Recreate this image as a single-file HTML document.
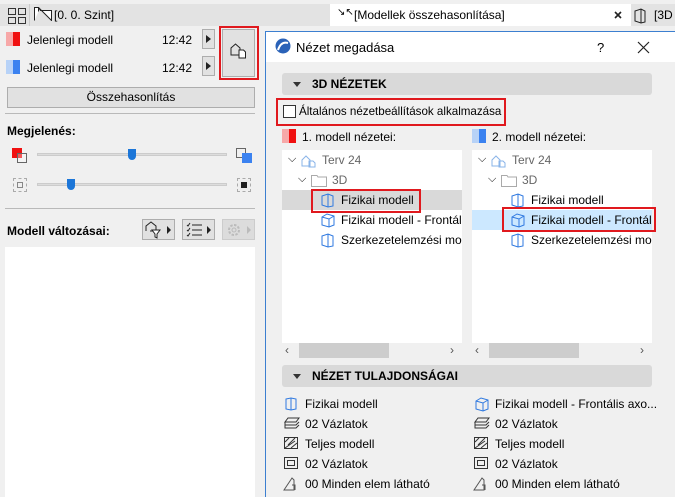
<!DOCTYPE html>
<html><head><meta charset="utf-8"><style>
*{box-sizing:border-box;margin:0;padding:0}
body{width:675px;height:497px;overflow:hidden;background:#f0f0f0;font-family:"Liberation Sans",sans-serif;font-size:12px;color:#000;position:relative}
.a{position:absolute}
.t{position:absolute;white-space:nowrap;line-height:14px}
.b{font-weight:bold}
.btn{position:absolute;background:#e1e1e1;border:1px solid #adadad}
.hdr{position:absolute;background:#d9d9d9;border-radius:3px;font-weight:bold;font-size:12px;line-height:22px;padding-left:30px}
.hdr:before{content:"";position:absolute;left:11px;top:9px;border-left:4px solid transparent;border-right:4px solid transparent;border-top:5px solid #333}
.red{position:absolute;border:2px solid #e0191e}
.tree{position:absolute;background:#fff;overflow:hidden}
.sb{position:absolute;background:#f0f0f0;height:15px}
.sb .th{position:absolute;top:0;height:15px;background:#cdcdcd}
</style></head><body>
<div class="a" style="left:0;top:0;width:675px;height:4px;background:#f0f0f0"></div>
<div class="a" style="left:0;top:4px;width:675px;height:22px;background:#e3e3e3"></div>
<svg class="a" style="left:8px;top:8px" width="18" height="16"><g fill="none" stroke="#333"><rect x="0.5" y="0.5" width="7" height="6"/><rect x="10.5" y="0.5" width="7" height="6"/><rect x="0.5" y="9.5" width="7" height="6"/><rect x="10.5" y="9.5" width="7" height="6"/></g></svg>
<div class="a" style="left:29px;top:4px;width:1px;height:22px;background:#ccc"></div>
<svg class="a" style="left:34px;top:7px" width="18" height="14"><path d="M0.5 13.5V0.5H4.5V4.5M4.5 0.5L6.5 3.5H17.5V13.5Z" fill="#fff" stroke="#222"/></svg>
<div class="t" style="left:54px;top:8px">[0. 0. Szint]</div>
<div class="a" style="left:330px;top:4px;width:301px;height:22px;background:#fff"></div>
<div class="t" style="left:337px;top:6px;font-size:10px">↘↖</div>
<div class="t" style="left:354px;top:8px">[Modellek összehasonlítása]</div>
<svg class="a" style="left:614px;top:11px" width="8" height="8"><path d="M1 1L7 7M7 1L1 7" stroke="#222" stroke-width="1.6"/></svg>
<svg class="a" style="left:634px;top:8px" width="14" height="16"><path d="M1 3L7 1L11 3V14L7 15L1 13Z M7 1V15" fill="none" stroke="#222"/></svg>
<div class="t" style="left:654px;top:8px">[3D</div>

<div class="a" style="left:6px;top:32px;width:7px;height:14px;background:#f7a8a8"></div>
<div class="a" style="left:13px;top:32px;width:7px;height:14px;background:#f01010"></div>
<div class="t" style="left:27px;top:33px">Jelenlegi modell</div>
<div class="t" style="left:162px;top:33px">12:42</div>
<div class="btn" style="left:202px;top:29px;width:13px;height:20px"><div class="a" style="left:3px;top:5px;border-top:4px solid transparent;border-bottom:4px solid transparent;border-left:5px solid #222"></div></div>
<div class="a" style="left:6px;top:60px;width:7px;height:14px;background:#b7d2f7"></div>
<div class="a" style="left:13px;top:60px;width:7px;height:14px;background:#3b82f0"></div>
<div class="t" style="left:27px;top:61px">Jelenlegi modell</div>
<div class="t" style="left:162px;top:61px">12:42</div>
<div class="btn" style="left:202px;top:56px;width:13px;height:20px"><div class="a" style="left:3px;top:5px;border-top:4px solid transparent;border-bottom:4px solid transparent;border-left:5px solid #222"></div></div>
<div class="btn" style="left:222px;top:29px;width:33px;height:48px"></div>
<svg class="a" style="left:230px;top:43px" width="18" height="16"><path d="M1 12V5L5.5 1L10 5V12Z" fill="none" stroke="#222"/><path d="M9 7H13.5L15.5 9V15H9Z" fill="#fff" stroke="#222"/></svg>
<div class="red" style="left:219px;top:26px;width:40px;height:54px"></div>
<div class="btn" style="left:7px;top:87px;width:248px;height:21px;text-align:center;line-height:19px">Összehasonlítás</div>
<div class="a" style="left:5px;top:113px;width:250px;height:1px;background:#b9b9b9"></div>
<div class="t b" style="left:7px;top:124px">Megjelenés:</div>
<div class="a" style="left:12px;top:148px;width:10px;height:10px;background:#f01010"></div>
<div class="a" style="left:17px;top:153px;width:10px;height:10px;border:1px solid #666;background:rgba(255,255,255,.3)"></div>
<div class="a" style="left:37px;top:153px;width:190px;height:3px;background:#ddd;border:1px solid #ccc"></div>
<div class="a" style="left:128px;top:149px;width:8px;height:11px;background:#1c76d8;border-radius:0 0 4px 4px"></div>
<div class="a" style="left:236px;top:148px;width:10px;height:10px;border:1px solid #666"></div>
<div class="a" style="left:242px;top:153px;width:10px;height:10px;background:#3b82f0"></div>
<div class="a" style="left:13px;top:178px;width:14px;height:14px;border:1px dashed #aaa"></div>
<div class="a" style="left:17px;top:182px;width:6px;height:6px;border:1px solid #888"></div>
<div class="a" style="left:37px;top:183px;width:190px;height:3px;background:#ddd;border:1px solid #ccc"></div>
<div class="a" style="left:67px;top:179px;width:8px;height:11px;background:#1c76d8;border-radius:0 0 4px 4px"></div>
<div class="a" style="left:237px;top:178px;width:14px;height:14px;border:1px dashed #aaa"></div>
<div class="a" style="left:241px;top:182px;width:6px;height:6px;background:#222"></div>
<div class="a" style="left:5px;top:208px;width:250px;height:1px;background:#b9b9b9"></div>
<div class="t b" style="left:7px;top:224px">Modell változásai:</div>
<div class="btn" style="left:142px;top:219px;width:33px;height:21px"></div>
<svg class="a" style="left:145px;top:221px" width="20" height="18"><path d="M1 10V5L6 1L11 5V10H5" fill="none" stroke="#222"/><path d="M7 9H15L12 13V17L10 16V13Z" fill="#fff" stroke="#222"/></svg>
<div class="a" style="left:167px;top:226px;border-top:4px solid transparent;border-bottom:4px solid transparent;border-left:4px solid #222"></div>
<div class="btn" style="left:182px;top:219px;width:33px;height:21px"></div>
<svg class="a" style="left:186px;top:222px" width="18" height="16"><g stroke="#222" fill="none"><path d="M1 3L2 4L4 1M1 8L2 9L4 6M1 13L2 14L4 11"/><path d="M6 3H16M6 8H16M6 13H16"/></g></svg>
<div class="a" style="left:207px;top:226px;border-top:4px solid transparent;border-bottom:4px solid transparent;border-left:4px solid #222"></div>
<div class="a" style="left:222px;top:219px;width:33px;height:21px;background:#dcdcdc;border:1px solid #ccc"></div>
<svg class="a" style="left:226px;top:222px" width="16" height="16"><circle cx="8" cy="8" r="5" fill="none" stroke="#bbb" stroke-width="2" stroke-dasharray="2.5 1.4"/><circle cx="8" cy="8" r="2" fill="none" stroke="#bbb"/></svg>
<div class="a" style="left:247px;top:226px;border-top:4px solid transparent;border-bottom:4px solid transparent;border-left:4px solid #bbb"></div>
<div class="a" style="left:5px;top:247px;width:250px;height:250px;background:#fff"></div>

<div class="a" style="left:265px;top:31px;width:410px;height:466px;border:1px solid #3c7fd0;border-right:none;border-bottom:none;background:#f0f0f0"></div>
<div class="a" style="left:266px;top:32px;width:409px;height:30px;background:#fff"></div>
<svg class="a" style="left:275px;top:38px" width="16" height="16"><circle cx="8" cy="8" r="7.5" fill="#2a62b8"/><path d="M3 12Q6 3 13 5" stroke="#fff" stroke-width="2" fill="none"/></svg>
<div class="t" style="left:296px;top:41px;font-size:13px">Nézet megadása</div>
<div class="t" style="left:597px;top:41px;font-size:13px">?</div>
<svg class="a" style="left:637px;top:41px" width="13" height="13"><path d="M1 1L12 12M12 1L1 12" stroke="#222" stroke-width="1.2"/></svg>

<div class="hdr" style="left:282px;top:73px;width:370px;height:22px">3D NÉZETEK</div>
<div class="a" style="left:283px;top:105px;width:13px;height:13px;border:1px solid #333;background:#fff"></div>
<div class="t" style="left:299px;top:105px;font-size:11.6px">Általános nézetbeállítások alkalmazása</div>
<div class="red" style="left:276px;top:98px;width:230px;height:28px"></div>

<div class="a" style="left:282px;top:129px;width:7px;height:14px;background:#f7a8a8"></div>
<div class="a" style="left:289px;top:129px;width:7px;height:14px;background:#f01010"></div>
<div class="t" style="left:302px;top:130px">1. modell nézetei:</div>
<div class="a" style="left:472px;top:129px;width:7px;height:14px;background:#b7d2f7"></div>
<div class="a" style="left:479px;top:129px;width:7px;height:14px;background:#3b82f0"></div>
<div class="t" style="left:492px;top:130px">2. modell nézetei:</div>

<div class="tree" style="left:282px;top:150px;width:180px;height:193px">
 <div class="a" style="left:0;top:40px;width:180px;height:20px;background:#d9d9d9"></div>
 <div class="t" style="left:6px;top:2px;font-size:11px">⌵</div>
 <svg class="a" style="left:19px;top:4px" width="16" height="14"><path d="M1 12V6L5 2L9 6V12Z M8 7H12L14 9V13H8Z" fill="#fff" stroke="#8ab4e8"/></svg>
 <div class="t" style="left:40px;top:3px;color:#666">Terv 24</div>
 <div class="t" style="left:16px;top:22px;font-size:11px">⌵</div>
 <svg class="a" style="left:29px;top:24px" width="16" height="13"><path d="M0.5 1.5H6L7 3H15.5V12.5H0.5Z" fill="#fff" stroke="#aaa"/></svg>
 <div class="t" style="left:50px;top:23px;color:#666">3D</div>
 <svg class="a" style="left:39px;top:43px" width="14" height="15"><path d="M1 3L7 1L12 3V13L7 14L1 12Z M7 1V14" fill="none" stroke="#2f79e0"/></svg>
 <div class="t" style="left:59px;top:43px">Fizikai modell</div>
 <svg class="a" style="left:39px;top:63px" width="14" height="15"><path d="M1 4L6 1L13 3V12L8 14L1 12Z M1 4L8 6L13 3M8 6V14" fill="none" stroke="#2f79e0"/></svg>
 <div class="t" style="left:59px;top:63px">Fizikai modell - Frontális</div>
 <svg class="a" style="left:39px;top:83px" width="14" height="15"><path d="M1 3L7 1L12 3V13L7 14L1 12Z M7 1V14" fill="none" stroke="#2f79e0"/></svg>
 <div class="t" style="left:59px;top:83px">Szerkezetelemzési modell</div>
</div>
<div class="tree" style="left:472px;top:150px;width:180px;height:193px">
 <div class="a" style="left:0;top:60px;width:180px;height:20px;background:#cce8ff"></div>
 <div class="t" style="left:6px;top:2px;font-size:11px">⌵</div>
 <svg class="a" style="left:19px;top:4px" width="16" height="14"><path d="M1 12V6L5 2L9 6V12Z M8 7H12L14 9V13H8Z" fill="#fff" stroke="#8ab4e8"/></svg>
 <div class="t" style="left:40px;top:3px;color:#666">Terv 24</div>
 <div class="t" style="left:16px;top:22px;font-size:11px">⌵</div>
 <svg class="a" style="left:29px;top:24px" width="16" height="13"><path d="M0.5 1.5H6L7 3H15.5V12.5H0.5Z" fill="#fff" stroke="#aaa"/></svg>
 <div class="t" style="left:50px;top:23px;color:#666">3D</div>
 <svg class="a" style="left:39px;top:43px" width="14" height="15"><path d="M1 3L7 1L12 3V13L7 14L1 12Z M7 1V14" fill="none" stroke="#2f79e0"/></svg>
 <div class="t" style="left:59px;top:43px">Fizikai modell</div>
 <svg class="a" style="left:39px;top:63px" width="14" height="15"><path d="M1 4L6 1L13 3V12L8 14L1 12Z M1 4L8 6L13 3M8 6V14" fill="none" stroke="#2f79e0"/></svg>
 <div class="t" style="left:59px;top:63px">Fizikai modell - Frontális</div>
 <svg class="a" style="left:39px;top:83px" width="14" height="15"><path d="M1 3L7 1L12 3V13L7 14L1 12Z M7 1V14" fill="none" stroke="#2f79e0"/></svg>
 <div class="t" style="left:59px;top:83px">Szerkezetelemzési modell</div>
</div>
<div class="red" style="left:311px;top:189px;width:110px;height:24px"></div>
<div class="red" style="left:502px;top:207px;width:154px;height:25px"></div>

<div class="sb" style="left:282px;top:343px;width:180px"><div class="th" style="left:17px;width:90px"></div><div class="t" style="left:3px;top:0;color:#555">‹</div><div class="t" style="left:168px;top:0;color:#555">›</div></div>
<div class="sb" style="left:472px;top:343px;width:180px"><div class="th" style="left:17px;width:90px"></div><div class="t" style="left:3px;top:0;color:#555">‹</div><div class="t" style="left:168px;top:0;color:#555">›</div></div>

<div class="hdr" style="left:282px;top:365px;width:370px;height:22px">NÉZET TULAJDONSÁGAI</div>

<svg class="a" style="left:285px;top:397px" width="14" height="14"><path d="M1 2L6 1L11 2V12L6 13L1 12Z M6 1V13" fill="none" stroke="#2f79e0"/></svg>
<div class="t" style="left:305px;top:397px">Fizikai modell</div>
<svg class="a" style="left:475px;top:397px" width="14" height="15"><path d="M1 4L6 1L13 3V12L8 14L1 12Z M1 4L8 6L13 3M8 6V14" fill="none" stroke="#2f79e0"/></svg>
<div class="t" style="left:495px;top:397px">Fizikai modell - Frontális axo...</div>

<svg class="a" style="left:284px;top:417px" width="16" height="14"><path d="M4 1H15L12 5H1Z M1 5V8H12L15 5 M1 8V11H12L15 8" fill="none" stroke="#333"/></svg>
<div class="t" style="left:305px;top:417px">02 Vázlatok</div>
<svg class="a" style="left:474px;top:417px" width="16" height="14"><path d="M4 1H15L12 5H1Z M1 5V8H12L15 5 M1 8V11H12L15 8" fill="none" stroke="#333"/></svg>
<div class="t" style="left:495px;top:417px">02 Vázlatok</div>

<svg class="a" style="left:284px;top:437px" width="15" height="13"><rect x="0.5" y="0.5" width="13" height="11" fill="none" stroke="#333"/><path d="M1 5L5 1M4 8L11 1M1 11L11 4M7 11L13 6" stroke="#333"/></svg>
<div class="t" style="left:305px;top:437px">Teljes modell</div>
<svg class="a" style="left:474px;top:437px" width="15" height="13"><rect x="0.5" y="0.5" width="13" height="11" fill="none" stroke="#333"/><path d="M1 5L5 1M4 8L11 1M1 11L11 4M7 11L13 6" stroke="#333"/></svg>
<div class="t" style="left:495px;top:437px">Teljes modell</div>

<svg class="a" style="left:284px;top:457px" width="15" height="13"><rect x="0.5" y="0.5" width="13" height="11" fill="none" stroke="#333"/><rect x="3.5" y="3.5" width="7" height="5" fill="none" stroke="#333"/></svg>
<div class="t" style="left:305px;top:457px">02 Vázlatok</div>
<svg class="a" style="left:474px;top:457px" width="15" height="13"><rect x="0.5" y="0.5" width="13" height="11" fill="none" stroke="#333"/><rect x="3.5" y="3.5" width="7" height="5" fill="none" stroke="#333"/></svg>
<div class="t" style="left:495px;top:457px">02 Vázlatok</div>

<svg class="a" style="left:283px;top:476px" width="17" height="15"><path d="M1 14L9 2L11 4V14Z M9 9H12V14" fill="none" stroke="#555"/></svg>
<div class="t" style="left:305px;top:477px">00 Minden elem látható</div>
<svg class="a" style="left:473px;top:476px" width="17" height="15"><path d="M1 14L9 2L11 4V14Z M9 9H12V14" fill="none" stroke="#555"/></svg>
<div class="t" style="left:495px;top:477px">00 Minden elem látható</div>
</body></html>
